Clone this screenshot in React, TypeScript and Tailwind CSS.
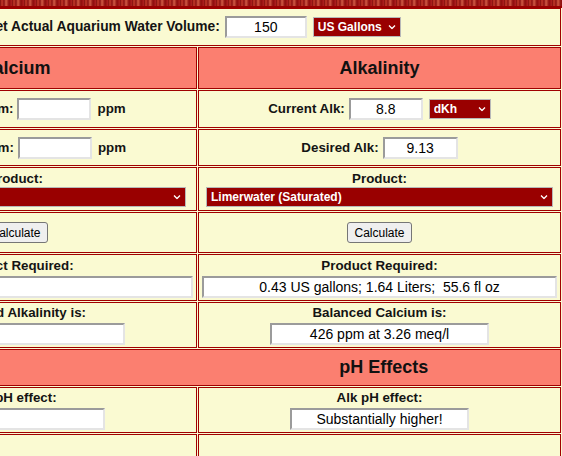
import React from 'react';

// reef chemistry calculator table, scrolled so the left column is partly cut off

const cell = 'border border-[#a00000] bg-[#fafad2] flex items-center justify-center';
const head = 'border border-[#a00000] bg-[#fb7f70] flex items-center justify-center';
const label = 'text-[13.33px] font-bold text-[#141414] leading-[16px] whitespace-nowrap';

const Chevron = () => (
  <svg
    width="8"
    height="5"
    viewBox="0 0 8 5"
    className="absolute right-[5px] top-1/2 -translate-y-1/2 pointer-events-none"
  >
    <polyline points="1,1 4,4 7,1" fill="none" stroke="white" strokeWidth="1.3" />
  </svg>
);

function Select({ value, w }: { value: string; w: string }) {
  return (
    <span className={`relative inline-flex ${w}`}>
      <select
        defaultValue={value}
        className="appearance-none w-full h-[20px] bg-[#990000] text-white font-bold text-[12px] pl-[4px] border border-[#b8b8b8] outline-none"
      >
        <option>{value}</option>
      </select>
      <Chevron />
    </span>
  );
}

function Field({ value = '', w }: { value?: string; w: string }) {
  return (
    <input
      readOnly
      value={value}
      className={`${w} h-[22px] bg-white text-center text-[14px] text-black border-2 border-t-[#9b9b9b] border-l-[#9b9b9b] border-r-[#e4e4e4] border-b-[#e4e4e4] outline-none`}
    />
  );
}

const Button = () => (
  <button className="h-[21px] px-[6px] bg-[#efefef] border border-[#767676] rounded-[3px] text-[12px] text-black leading-none">
    Calculate
  </button>
);

export default function App() {
  return (
    <div className="w-[562px] h-[456px] overflow-hidden bg-[#fafad2] font-['Liberation_Sans',Arial,sans-serif]">
      {/* header banner strip */}
      <div className="h-[8px] bg-[repeating-linear-gradient(90deg,#7a0a0a_0px,#c43a2a_2px,#8a1010_4px,#d25a44_6px,#8c0c0c_9px,#b02020_12px)] border-b-2 border-[#9a0000]" />

      <div className="ml-[-166px] w-[727px] grid grid-cols-[363px_363px] gap-[1px]">
        {/* volume */}
        <div className={`${cell} col-span-2 h-[38px] pr-[8px]`}>
          <span className="text-[13.8px] font-bold text-[#141414] leading-[16px] whitespace-nowrap">
            Set Actual Aquarium Water Volume:
          </span>
          <span className="ml-[5px] flex">
            <Field value="150" w="w-[82px]" />
          </span>
          <span className="ml-[6px] flex">
            <Select value="US Gallons" w="w-[88px]" />
          </span>
        </div>

        {/* section headers */}
        <div className={`${head} h-[42px]`}>
          <span className="text-[18px] font-bold text-[#111]">Calcium</span>
        </div>
        <div className={`${head} h-[42px]`}>
          <span className="text-[18px] font-bold text-[#111]">Alkalinity</span>
        </div>

        {/* current */}
        <div className={`${cell} h-[38px]`}>
          <span className={label}>Current Calcium:</span>
          <span className="ml-[4px] flex">
            <Field w="w-[74px]" />
          </span>
          <span className={`${label} ml-[6px]`}>ppm</span>
        </div>
        <div className={`${cell} h-[38px]`}>
          <span className={label}>Current Alk:</span>
          <span className="ml-[4px] flex">
            <Field value="8.8" w="w-[74px]" />
          </span>
          <span className="ml-[6px] flex">
            <Select value="dKh" w="w-[62px]" />
          </span>
        </div>

        {/* desired */}
        <div className={`${cell} h-[37px]`}>
          <span className={label}>Desired Calcium:</span>
          <span className="ml-[4px] flex">
            <Field w="w-[74px]" />
          </span>
          <span className={`${label} ml-[6px]`}>ppm</span>
        </div>
        <div className={`${cell} h-[37px]`}>
          <span className={label}>Desired Alk:</span>
          <span className="ml-[4px] flex">
            <Field value="9.13" w="w-[75px]" />
          </span>
        </div>

        {/* product select */}
        <div className={`${cell} flex-col h-[44px]`}>
          <span className={label}>Product:</span>
          <Select value="Kalkwasser" w="w-[340px]" />
        </div>
        <div className={`${cell} flex-col h-[44px]`}>
          <span className={label}>Product:</span>
          <Select value="Limerwater (Saturated)" w="w-[347px]" />
        </div>

        {/* calculate */}
        <div className={`${cell} h-[41px]`}>
          <Button />
        </div>
        <div className={`${cell} h-[41px]`}>
          <Button />
        </div>

        {/* product required */}
        <div className={`${cell} flex-col gap-[2px] h-[47px]`}>
          <span className={label}>Product Required:</span>
          <Field w="w-[354px]" />
        </div>
        <div className={`${cell} flex-col gap-[2px] h-[47px]`}>
          <span className={label}>Product Required:</span>
          <Field value="0.43 US gallons; 1.64 Liters;  55.6 fl oz" w="w-[355px]" />
        </div>

        {/* balanced */}
        <div className={`${cell} flex-col gap-[2px] h-[46px]`}>
          <span className={label}>Balanced Alkalinity is:</span>
          <Field w="w-[218px]" />
        </div>
        <div className={`${cell} flex-col gap-[2px] h-[46px]`}>
          <span className={label}>Balanced Calcium is:</span>
          <Field value="426 ppm at 3.26 meq/l" w="w-[219px]" />
        </div>

        {/* pH effects header */}
        <div className={`${head} col-span-2 h-[37px] grid grid-cols-2`}>
          <span />
          <span className="text-[18px] font-bold text-[#111] text-center pl-[10px]">pH Effects</span>
        </div>

        <div className={`${cell} flex-col gap-[2px] h-[46px]`}>
          <span className={label}>Ca pH effect:</span>
          <Field w="w-[178px]" />
        </div>
        <div className={`${cell} flex-col gap-[2px] h-[46px]`}>
          <span className={label}>Alk pH effect:</span>
          <Field value="Substantially higher!" w="w-[179px]" />
        </div>

        <div className={`${cell} h-[40px]`} />
        <div className={`${cell} h-[40px]`} />
      </div>
    </div>
  );
}
